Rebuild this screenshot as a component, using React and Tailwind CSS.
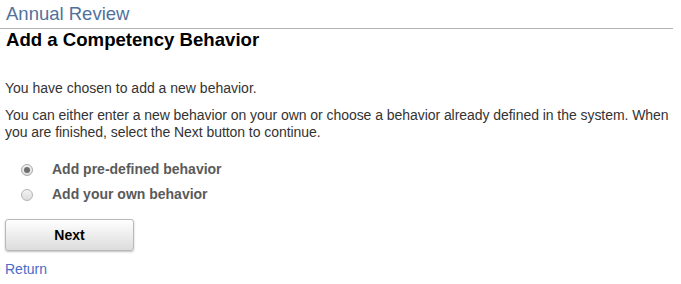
export default function App() {
  return (
    <div className="w-[681px] h-[284px] bg-white font-['Liberation_Sans',Arial,sans-serif] overflow-hidden">
      <div className="mr-[8px] border-b border-[#b4b4b4] pl-[6px] pt-[2px] h-[29px]">
        <div className="text-[18.5px] leading-[24px] text-[#51719b]">Annual Review</div>
      </div>
      <h1 className="pl-[6px] text-[18.6px] leading-[22px] font-bold text-black">Add a Competency Behavior</h1>

      <p className="pl-[5px] mt-[29px] text-[14px] leading-[17px] text-[#333]">
        You have chosen to add a new behavior.
      </p>
      <p className="pl-[5px] mt-[10px] text-[14px] leading-[17px] text-[#333] tracking-[-0.05px]">
        You can either enter a new behavior on your own or choose a behavior already defined in the system. When
        you are finished, select the Next button to continue.
      </p>

      <div className="mt-[20px] flex flex-col gap-[8px]">
        <label className="flex items-center h-[17px]">
          <span className="ml-[21px] w-[12px] h-[12px] rounded-full border border-[#a9a9a9] bg-gradient-to-b from-[#f4f4f4] to-[#dcdcdc] flex items-center justify-center">
            <span className="w-[6px] h-[6px] rounded-full bg-[#6e6e6e]"></span>
          </span>
          <span className="ml-[19px] text-[14px] font-bold text-[#5a5a5a]">Add pre-defined behavior</span>
        </label>
        <label className="flex items-center h-[17px]">
          <span className="ml-[21px] w-[12px] h-[12px] rounded-full border border-[#b4b4b4] bg-gradient-to-b from-[#f4f4f4] to-[#dcdcdc]"></span>
          <span className="ml-[19px] text-[14px] font-bold text-[#5a5a5a]">Add your own behavior</span>
        </label>
      </div>

      <button className="ml-[5px] mt-[16px] w-[129px] h-[32px] rounded-[3px] border border-[#b8b8b8] bg-gradient-to-b from-[#ffffff] to-[#dcdcdc] shadow-[0_1px_2px_rgba(0,0,0,0.25)] text-[14px] font-bold text-black">
        Next
      </button>

      <div className="pl-[5px] mt-[6px]">
        <a className="text-[14px] text-[#4a6bc8]">Return</a>
      </div>
    </div>
  );
}
